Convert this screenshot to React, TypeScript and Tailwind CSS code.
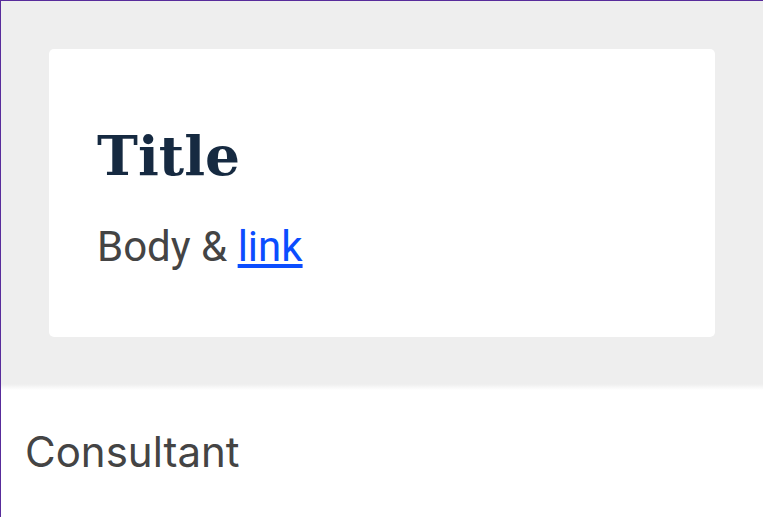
import React from "react";

export default function App() {
  return (
    <div className="w-[763px] h-[517px] overflow-hidden border-l border-t border-[#582c9b] bg-white">
      <div className="bg-[#eeeeee] p-12 pb-[47px]">
        <div className="bg-white rounded-[5px] h-[288px] px-12 pt-[75px]">
          <h1
            className="text-[55px] leading-[64px] font-bold text-[#162a41]"
            style={{ fontFamily: '"DejaVu Serif", serif' }}
          >
            Title
          </h1>
          <p
            className="mt-[35px] text-[42px] leading-[48px] text-[#444444]"
            style={{ fontFamily: 'Roboto, sans-serif' }}
          >
            Body &amp;{" "}
            <a href="#" className="text-[#0b4dff] underline">
              link
            </a>
          </p>
        </div>
      </div>
      <div className="relative">
        <div className="absolute inset-x-0 top-0 h-[6px] bg-gradient-to-b from-[#eeeeee] to-white" />
        <div
          className="px-6 pt-[44px] text-[42px] leading-[48px] text-[#444444]"
          style={{ fontFamily: 'Inter, sans-serif' }}
        >
          Consultant
        </div>
      </div>
    </div>
  );
}
